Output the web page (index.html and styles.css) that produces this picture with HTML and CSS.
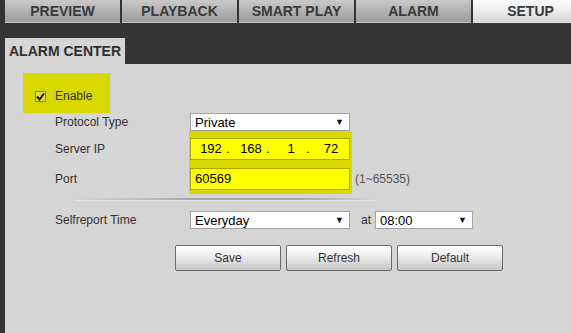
FILE: index.html
```html
<!DOCTYPE html>
<html>
<head>
<meta charset="utf-8">
<link rel="stylesheet" href="styles.css">
</head>
<body>
<div class="page">
  <nav class="tabs">
    <div class="tab">PREVIEW</div>
    <div class="tab">PLAYBACK</div>
    <div class="tab">SMART PLAY</div>
    <div class="tab">ALARM</div>
    <div class="tab active">SETUP</div>
  </nav>
  <div class="subbar">
    <div class="subtab">ALARM CENTER</div>
  </div>
  <main class="panel">
    <div class="enable-box">
      <span class="check">
        <svg width="9" height="9" viewBox="0 0 9 9"><path d="M1 4.5 L3.5 7.5 L8 1.5" fill="none" stroke="#1a1a00" stroke-width="2"/></svg>
      </span>
      <span class="enable-text">Enable</span>
    </div>
    <div class="row">
      <div class="label">Protocol Type</div>
      <div class="select wide"><span>Private</span><span class="arrow">▼</span></div>
    </div>
    <div class="group">
      <div class="labels">
        <div class="label tall">Server IP</div>
        <div class="label tall">Port</div>
      </div>
      <div class="hl">
        <div class="input ip">
          <span class="oct">192</span><span class="dot">.</span>
          <span class="oct">168</span><span class="dot">.</span>
          <span class="oct">1</span><span class="dot">.</span>
          <span class="oct">72</span>
        </div>
        <div class="input port">60569</div>
      </div>
      <div class="hint">(1~65535)</div>
    </div>
    <div class="sep"></div>
    <div class="row self">
      <div class="label">Selfreport Time</div>
      <div class="select wide"><span>Everyday</span><span class="arrow">▼</span></div>
      <span class="at">at</span>
      <div class="select small"><span>08:00</span><span class="arrow">▼</span></div>
    </div>
    <div class="buttons">
      <button class="btn">Save</button>
      <button class="btn">Refresh</button>
      <button class="btn">Default</button>
    </div>
  </main>
</div>
</body>
</html>
```

FILE: styles.css
```css
html, body {
  margin: 0;
  padding: 0;
  height: 100%;
}
body {
  background: #343434;
  font-family: "Liberation Sans", Arial, sans-serif;
  overflow: hidden;
}
.page {
  padding-left: 5px;
  height: 333px;
  display: flex;
  flex-direction: column;
}
.tabs {
  display: flex;
  gap: 2px;
  height: 23px;
  flex: none;
  overflow: hidden;
}
.tab {
  width: 115px;
  flex: none;
  height: 23px;
  box-sizing: border-box;
  background: linear-gradient(#c9c9c9, #b4b4b4 45%, #9c9c9c);
  border-bottom: 1px solid #c4c4c4;
  color: #3a3a3a;
  font-weight: bold;
  font-size: 14px;
  line-height: 22px;
  text-align: center;
}
.tab.active {
  background: linear-gradient(#fbfbfb, #ececec 50%, #d6d6d6);
  border-bottom-color: #e0e0e0;
}
.subbar {
  height: 26px;
  padding-top: 15px;
  flex: none;
  display: flex;
}
.subtab {
  width: 120px;
  height: 26px;
  box-sizing: border-box;
  background: #d5d5d5;
  color: #303030;
  font-weight: bold;
  font-size: 14px;
  line-height: 26px;
  padding-left: 4px;
}
.panel {
  flex: 1;
  background: #d5d5d5;
  padding-top: 9px;
}
.enable-box {
  margin-left: 18px;
  width: 87px;
  height: 40px;
  box-sizing: border-box;
  background: #d8d800;
  display: flex;
  align-items: center;
  padding-left: 12px;
  padding-top: 6px;
}
.check {
  width: 11px;
  height: 11px;
  box-sizing: border-box;
  border: 1px solid #8f8f00;
  background: #dede4a;
  display: flex;
  align-items: center;
  justify-content: center;
  margin-right: 9px;
}
.enable-text {
  font-size: 12px;
  color: #333;
}
.row {
  display: flex;
  align-items: center;
  height: 18px;
  padding-left: 50px;
}
.label {
  width: 135px;
  flex: none;
  font-size: 12px;
  color: #333;
}
.select {
  height: 18px;
  box-sizing: border-box;
  background: #fff;
  border: 1px solid #a3a3a3;
  display: flex;
  justify-content: space-between;
  align-items: center;
  padding: 0 5px 0 4px;
  font-size: 13px;
  color: #000;
}
.select.wide {
  width: 160px;
}
.select.small {
  width: 98px;
}
.arrow {
  font-size: 9px;
  color: #111;
}
.group {
  display: flex;
  padding-left: 50px;
}
.labels {
  width: 134px;
  flex: none;
  padding-top: 7px;
  display: flex;
  flex-direction: column;
  gap: 8px;
}
.label.tall {
  height: 22px;
  line-height: 22px;
}
.hl {
  width: 163px;
  box-sizing: border-box;
  background: #d8d800;
  padding: 7px 2px 4px 1px;
  display: flex;
  flex-direction: column;
  gap: 8px;
}
.input {
  height: 22px;
  box-sizing: border-box;
  background: #ffff00;
  border: 1px solid #a9a900;
  font-size: 13px;
  color: #000;
  line-height: 20px;
  display: flex;
}
.ip {
  padding-left: 5px;
}
.oct {
  width: 30px;
  text-align: center;
}
.dot {
  width: 10px;
}
.port {
  padding-left: 4px;
}
.hint {
  padding-top: 37px;
  padding-left: 3px;
  font-size: 12px;
  line-height: 22px;
  color: #555;
}
.sep {
  margin: 4px 0 0 70px;
  width: 300px;
  height: 2px;
  background: linear-gradient(to right, rgba(150,150,150,0), #a6a6a6 40%, #a6a6a6 75%, rgba(150,150,150,0));
  border-bottom: 1px solid #e4e4e4;
}
.self {
  margin-top: 10px;
}
.at {
  font-size: 12px;
  color: #333;
  margin: 0 4px 0 11px;
}
.buttons {
  display: flex;
  gap: 5px;
  padding-left: 170px;
  margin-top: 16px;
}
.btn {
  width: 106px;
  height: 26px;
  box-sizing: border-box;
  border: 1px solid #6a6a6a;
  border-radius: 2px;
  background: linear-gradient(#ffffff, #eeeeee 40%, #c6c6c6);
  font-family: "Liberation Sans", Arial, sans-serif;
  font-size: 12px;
  color: #333;
  padding: 0;
}
```
